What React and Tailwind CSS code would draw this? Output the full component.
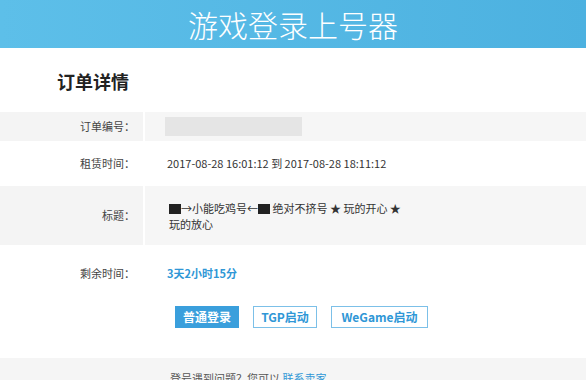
import React from "react";

const cjk = { fontFamily: '"Noto Sans CJK SC", "Liberation Sans", sans-serif' };

function Square() {
  return <span className="inline-block w-[12px] h-[10px] bg-[#222] align-[-1px]" />;
}

function Row({ label, gray, height, children }) {
  return (
    <div className={`flex ${height} ${gray ? "bg-[#f4f4f4]" : "bg-white"}`}>
      <div className="w-[143px] shrink-0 flex items-center justify-end pr-[8px] text-[11px] text-[#444]">
        {label}
      </div>
      <div
        className={`flex-1 flex items-center pl-[24px] text-[11px] text-[#333] ${
          gray ? "border-l-2 border-white bg-[#f6f6f6]" : ""
        }`}
      >
        {children}
      </div>
    </div>
  );
}

export default function App() {
  return (
    <div className="w-[586px] h-[380px] overflow-hidden bg-white" style={cjk}>
      {/* header */}
      <div className="h-[48px] bg-gradient-to-r from-[#5dbfe9] to-[#4cb1e0] flex items-center justify-center">
        <h1 className="text-[30px] font-light text-white leading-none">游戏登录上号器</h1>
      </div>

      <div className="h-[64px] flex items-center pl-[57px] pt-[2px]">
        <h2 className="text-[18px] font-bold text-[#222]">订单详情</h2>
      </div>

      <Row label="订单编号：" gray height="h-[29px]">
        <div className="w-[137px] h-[19px] bg-[#e5e5e5] -ml-[4px]" />
      </Row>
      <Row label="租赁时间：" height="h-[45px]">
        <span>2017-08-28 16:01:12 到 2017-08-28 18:11:12</span>
      </Row>
      <Row label="标题：" gray height="h-[59px]">
        <div className="leading-[16px] pt-[1px]">
          <div>
            <Square />→小能吃鸡号←<Square /> 绝对不挤号 ★ 玩的开心 ★
          </div>
          <div>玩的放心</div>
        </div>
      </Row>
      <Row label="剩余时间：" height="h-[56px]">
        <span className="font-bold text-[#2f97d6]">3天2小时15分</span>
      </Row>

      {/* buttons */}
      <div className="flex gap-[14px] pl-[175px] pt-[5px] h-[57px]">
        <button className="h-[22px] w-[64px] bg-[#3a9fdc] text-white text-[12px] font-bold">普通登录</button>
        <button className="h-[22px] w-[64px] border border-[#7cc0e8] text-[#2f97d6] text-[12px] font-bold">TGP启动</button>
        <button className="h-[22px] w-[97px] border border-[#7cc0e8] text-[#2f97d6] text-[12px] font-bold">WeGame启动</button>
      </div>

      <div className="h-[29px] bg-[#f5f5f5] pl-[170px] pt-[12px] text-[11px] text-[#555]">
        登号遇到问题？您可以 <span className="text-[#2f97d6]">联系卖家</span>
      </div>
    </div>
  );
}
